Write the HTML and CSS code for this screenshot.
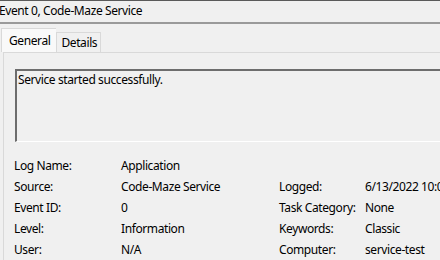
FILE: index.html
```html
<!DOCTYPE html>
<html>
<head>
<meta charset="utf-8">
<link rel="stylesheet" href="styles.css">
</head>
<body>
<div class="window">
  <div class="titlebar"><span class="title">Event 0, Code-Maze Service</span></div>
  <div class="tabs">
    <div class="tab active">General</div>
    <div class="tab">Details</div>
  </div>
  <div class="page">
    <div class="message">Service started successfully.</div>
    <div class="fields">
      <div class="lbl">Log Name:</div><div class="val">Application</div><div class="lbl2"></div><div class="val2"></div>
      <div class="lbl">Source:</div><div class="val">Code-Maze Service</div><div class="lbl2">Logged:</div><div class="val2">6/13/2022 10:00:00 AM</div>
      <div class="lbl">Event ID:</div><div class="val">0</div><div class="lbl2">Task Category:</div><div class="val2">None</div>
      <div class="lbl">Level:</div><div class="val">Information</div><div class="lbl2">Keywords:</div><div class="val2">Classic</div>
      <div class="lbl">User:</div><div class="val">N/A</div><div class="lbl2">Computer:</div><div class="val2">service-test</div>
    </div>
  </div>
</div>
</body>
</html>
```
FILE: styles.css
```css
html, body {
  margin: 0;
  padding: 0;
  background: #f0f0f0;
  overflow: hidden;
}
.window {
  width: 440px;
  height: 260px;
  overflow: hidden;
  font-family: "Noto Sans", "Open Sans", sans-serif;
  font-size: 12px;
  letter-spacing: -0.4px;
  color: #000;
}
.titlebar {
  height: 21px;
  border-top: 1px solid #5a5a5a;
  border-bottom: 2px solid #9a9a9a;
  line-height: 20px;
  white-space: nowrap;
}
.title {
  display: inline-block;
  margin-left: -1px;
}
.tabs {
  display: flex;
  align-items: flex-end;
  padding: 4px 0 0 1px;
  height: 24px;
}
.tab {
  box-sizing: border-box;
  height: 20px;
  padding: 0 3px 0 4px;
  border: 1px solid #d9d9d9;
  border-bottom: none;
  line-height: 19px;
  background: #f0f0f0;
}
.tab.active {
  height: 24px;
  padding: 2px 6px 0 7px;
  background: #f9f9f9;
  border-right: none;
}
.page {
  border-top: 1px solid #d9d9d9;
  border-left: 1px solid #d9d9d9;
  margin-left: 3px;
  padding: 16px 0 0 11px;
}
.message {
  box-sizing: border-box;
  height: 73px;
  border-top: 2px solid #6d6d6d;
  border-left: 2px solid #6d6d6d;
  border-bottom: 1px solid #ffffff;
  padding: 1px 0 0 1px;
  line-height: 16px;
  white-space: nowrap;
}
.fields {
  display: grid;
  grid-template-columns: 107px 158px 86px 1fr;
  grid-auto-rows: 21px;
  margin: 13px 0 0 -1px;
  line-height: 21px;
  white-space: nowrap;
}
```
